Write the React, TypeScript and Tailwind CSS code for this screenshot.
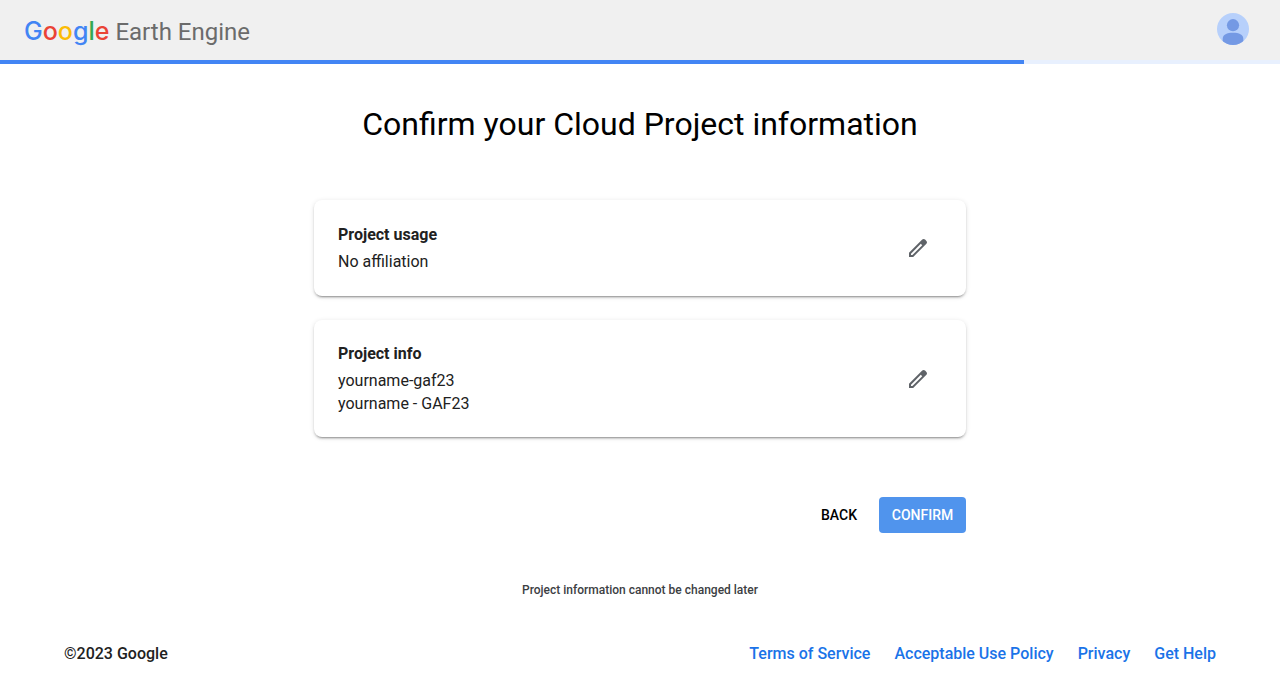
import type { ReactNode } from "react";

function Logo() {
  return (
    <a
      href="#home"
      aria-label="Google Earth Engine"
      className="flex items-baseline gap-1.5 pt-1 font-['Inter',sans-serif] text-2xl leading-8"
    >
      <span className="text-[25px] leading-8 font-medium">
        <span className="text-[#4285f4]">G</span>
        <span className="text-[#ea4335]">o</span>
        <span className="text-[#fbbc05]">o</span>
        <span className="text-[#4285f4]">g</span>
        <span className="text-[#34a853]">l</span>
        <span className="text-[#ea4335]">e</span>
      </span>
      <span className="font-['Roboto',sans-serif] text-[#6b6b6b]">Earth Engine</span>
    </a>
  );
}

function Avatar() {
  return (
    <button type="button" aria-label="Account" className="size-8 rounded-full">
      <svg viewBox="0 0 32 32" className="size-8" aria-hidden="true">
        <defs>
          <clipPath id="avatar-clip">
            <circle cx="16" cy="16" r="16" />
          </clipPath>
        </defs>
        <circle cx="16" cy="16" r="16" fill="#b7d0fb" />
        <g clipPath="url(#avatar-clip)" fill="#7499e4">
          <circle cx="16" cy="12.2" r="6.1" />
          <path d="M5.700 26C5.700 21.500 10 19.800 16 19.800S26.300 21.500 26.300 26v6H5.700z" />
        </g>
      </svg>
    </button>
  );
}

function PencilIcon() {
  return (
    <svg viewBox="0 0 24 24" className="size-6" fill="#5f6368" aria-hidden="true">
      <path d="M20.410 4.940l-1.350-1.350c-.78-.78-2.050-.78-2.830 0L3 16.820V21h4.180L20.410 7.770c.79-.78.79-2.050 0-2.830zm-14 14.120L5 19v-1.360l9.820-9.820 1.410 1.410-9.820 9.830z" />
    </svg>
  );
}

function InfoCard({ title, children }: { title: string; children: ReactNode }) {
  return (
    <section className="flex min-h-24 items-center justify-between rounded-lg bg-white px-6 py-[22px] shadow-[0_3px_1px_-2px_rgba(0,0,0,0.2),0_2px_2px_0_rgba(0,0,0,0.14),0_1px_5px_0_rgba(0,0,0,0.12)]">
      <div className="text-base leading-[23px] text-[#212121]">
        <h2 className="mb-1 font-bold">{title}</h2>
        {children}
      </div>
      <button type="button" aria-label={`Edit ${title}`} className="flex size-12 items-center justify-center rounded-full">
        <PencilIcon />
      </button>
    </section>
  );
}

const footerLinks = ["Terms of Service", "Acceptable Use Policy", "Privacy", "Get Help"];

export default function App() {
  return (
    <div className="flex min-h-screen flex-col bg-white font-['Roboto',sans-serif] text-black">
      <header className="flex h-[60px] items-center justify-between bg-[#f0f0f0] pr-[31px] pb-0.5 pl-6">
        <Logo />
        <Avatar />
      </header>
      <div
        role="progressbar"
        aria-label="Registration progress"
        aria-valuenow={80}
        aria-valuemin={0}
        aria-valuemax={100}
        className="h-1 bg-[#e8f0fe]"
      >
        <div className="h-full w-4/5 bg-[#4285f4]" />
      </div>

      <main className="mx-auto flex w-full max-w-[652px] flex-1 flex-col pt-10">
        <h1 className="text-center text-[32px] leading-10">Confirm your Cloud Project information</h1>
        <div className="mt-14 flex flex-col gap-6">
          <InfoCard title="Project usage">
            <p>No affiliation</p>
          </InfoCard>
          <InfoCard title="Project info">
            <p>yourname-gaf23</p>
            <p>yourname - GAF23</p>
          </InfoCard>
        </div>
        <div className="mt-[60px] flex justify-end gap-2.5 text-sm font-medium">
          <button type="button" className="h-9 px-3">
            BACK
          </button>
          <button type="button" className="h-9 min-w-[87px] rounded bg-[#5094ed] px-3 text-white">
            CONFIRM
          </button>
        </div>
        <p className="mt-12 text-center text-xs leading-[18px] font-medium text-[#3c4043]">
          Project information cannot be changed later
        </p>
      </main>

      <footer className="flex items-center justify-between px-16 pb-[27px] text-base font-medium">
        <span className="text-[#212121]">©2023 Google</span>
        <nav aria-label="Footer" className="flex gap-6">
          {footerLinks.map((label) => (
            <a key={label} href="#" className="text-[#1a73e8]">
              {label}
            </a>
          ))}
        </nav>
      </footer>
    </div>
  );
}
